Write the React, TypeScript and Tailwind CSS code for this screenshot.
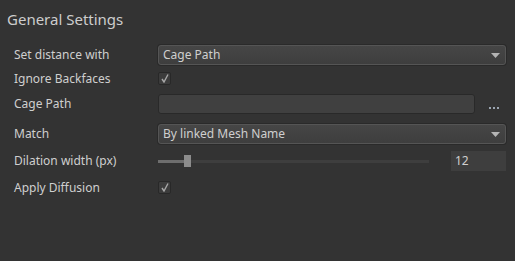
import React from 'react'

function Arrow() {
  return (
    <svg width="9" height="5" viewBox="0 0 9 5" className="shrink-0">
      <path d="M0 0h9L4.5 5z" fill="#b4b4b4" />
    </svg>
  )
}

function Check() {
  return (
    <div className="flex h-[13px] w-[13px] items-center justify-center rounded-[2px] border border-[#282828] bg-[#3c3c3c]">
      <svg width="8" height="9" viewBox="0 0 8 9">
        <path d="M1 5l2 3L7 0.5" fill="none" stroke="#a8a8a8" strokeWidth="1.4" />
      </svg>
    </div>
  )
}

function Select({ value }: { value: string }) {
  return (
    <div className="flex h-5 flex-1 items-center justify-between rounded-[3px] border border-[#555555] bg-gradient-to-b from-[#464646] to-[#3e3e3e] pl-[4px] pr-[5px] shadow-[0_0_0_1px_#2a2a2a]">
      <span>{value}</span>
      <Arrow />
    </div>
  )
}

function Row({ label, className, children }: { label: string; className: string; children: React.ReactNode }) {
  return (
    <div className={`flex items-center ${className}`}>
      <div className="w-[144px] shrink-0">{label}</div>
      <div className="flex flex-1 items-center">{children}</div>
    </div>
  )
}

export default function App() {
  return (
    <div
      className="h-[261px] w-[515px] bg-[#333333] text-[12px] text-[#cfcfcf]"
      style={{ fontFamily: '"Noto Sans", sans-serif' }}
    >
      <div className="px-[7px] pt-[9px] text-[15px] leading-[20px] text-[#cdcdcd]">General Settings</div>
      <div className="flex flex-col pl-[14px] pr-[9px] pt-[16px]">
        <Row label="Set distance with" className="h-5">
          <Select value="Cage Path" />
        </Row>
        <Row label="Ignore Backfaces" className="mt-[7px] h-[13px]">
          <Check />
        </Row>
        <Row label="Cage Path" className="mt-[9px] h-5">
          <div className="h-5 w-[317px] rounded-[3px] border border-[#292929] bg-[#404040]" />
          <div className="ml-[14px] mt-[8px] flex gap-[2px]">
            <span className="h-[2px] w-[2px] bg-[#9aa4b0]" />
            <span className="h-[2px] w-[2px] bg-[#9aa4b0]" />
            <span className="h-[2px] w-[2px] bg-[#9aa4b0]" />
          </div>
        </Row>
        <Row label="Match" className="mt-[10px] h-5">
          <Select value="By linked Mesh Name" />
        </Row>
        <Row label="Dilation width (px)" className="mt-[7px] h-5">
          <div className="relative flex h-5 w-[271px] items-center">
            <div className="h-[3px] w-[29px] bg-[#6e6e6e]" />
            <div className="h-[3px] flex-1 bg-[#3e3e3e]" />
            <div className="absolute left-[26px] top-[4px] h-[12px] w-[7px] bg-[#8c8c8c]" />
          </div>
          <div className="ml-[22px] flex h-5 flex-1 items-center bg-[#3e3e3e] pl-[4px]">12</div>
        </Row>
        <Row label="Apply Diffusion" className="mt-[10px] h-[13px]">
          <Check />
        </Row>
      </div>
    </div>
  )
}
